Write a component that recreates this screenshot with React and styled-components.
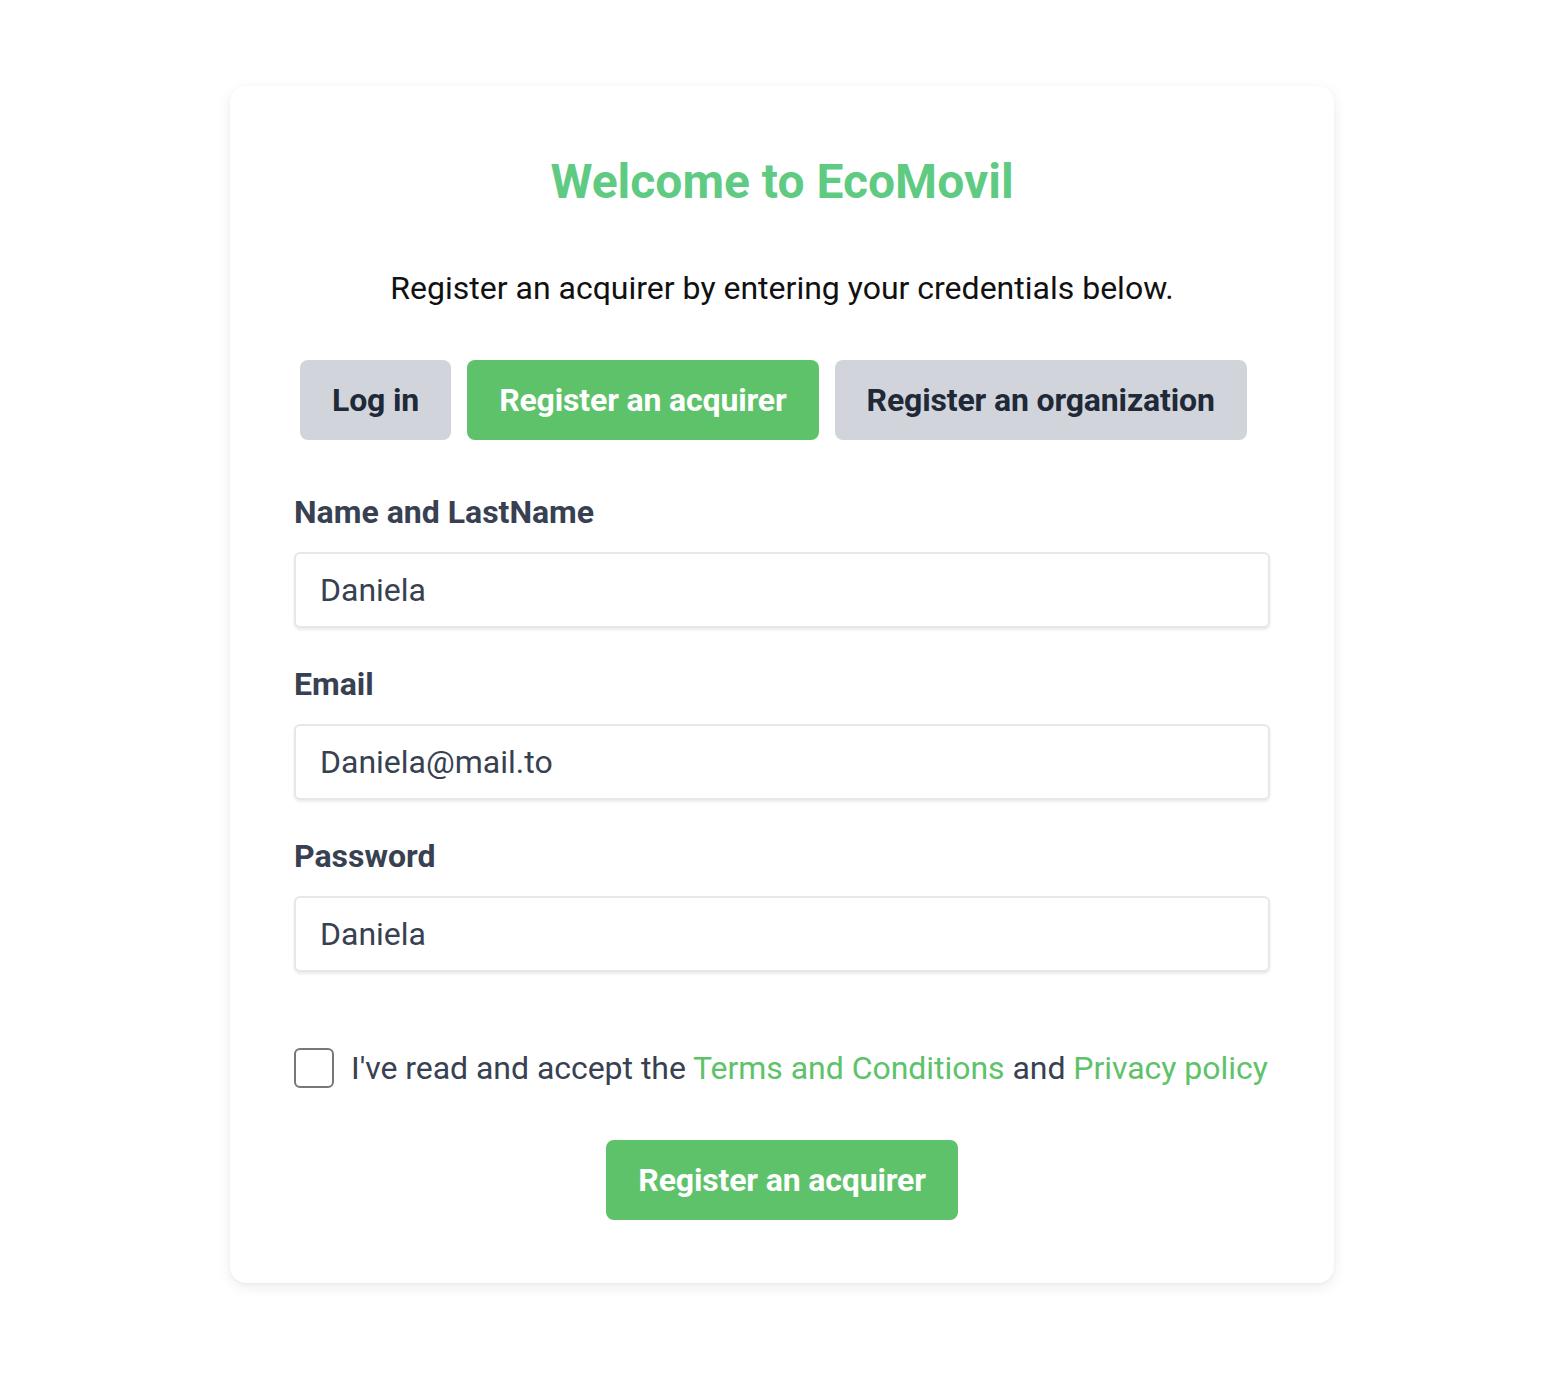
import React, { useState } from "react";
import styled, { createGlobalStyle } from "styled-components";

const GlobalStyle = createGlobalStyle`
  body {
    margin: 0;
    background: #ffffff;
    font-family: Roboto, "Liberation Sans", sans-serif;
  }
  * {
    box-sizing: border-box;
  }
`;

const Page = styled.main`
  display: flex;
  justify-content: center;
  padding: 86px 0 102px 4px;
`;

const Card = styled.section`
  width: 1104px;
  background: #ffffff;
  border-radius: 16px;
  box-shadow: 0 4px 14px rgba(0, 0, 0, 0.08), 0 1px 3px rgba(0, 0, 0, 0.04);
  padding: 64px 64px 63px;
  display: flex;
  flex-direction: column;
`;

const Title = styled.h1`
  margin: 0;
  text-align: center;
  font-size: 48px;
  line-height: 64px;
  font-weight: 700;
  color: #5fcb82;
`;

const Subtitle = styled.p`
  margin: 50px 0 0;
  text-align: center;
  font-size: 32px;
  line-height: 48px;
  color: #111111;
`;

const Tabs = styled.div`
  display: flex;
  gap: 16px;
  margin: 48px 0 0;
  padding-left: 6px;
`;

const Tab = styled.button`
  height: 80px;
  padding: 0 32px;
  border: none;
  border-radius: 8px;
  font-family: inherit;
  font-size: 32px;
  font-weight: 700;
  letter-spacing: -0.15px;
  cursor: pointer;
  background: ${(p) => (p.$active ? "#5ec26a" : "#d1d5db")};
  color: ${(p) => (p.$active ? "#ffffff" : "#1f2937")};
`;

const Field = styled.div`
  display: flex;
  flex-direction: column;
  gap: 20px;
  margin-top: ${(p) => p.$top}px;
`;

const Label = styled.label`
  font-size: 32px;
  line-height: 40px;
  font-weight: 700;
  color: #374151;
`;

const Input = styled.input`
  height: 76px;
  width: 100%;
  padding: 0 24px;
  border: 2px solid #e5e7eb;
  border-radius: 6px;
  box-shadow: 0 2px 3px rgba(0, 0, 0, 0.08);
  font-family: inherit;
  font-size: 32px;
  color: #374151;
  outline: none;
`;

const Terms = styled.label`
  display: flex;
  align-items: center;
  gap: 17px;
  margin-top: 76px;
  font-size: 32px;
  line-height: 40px;
  color: #374151;
  white-space: nowrap;
  letter-spacing: -0.04px;
`;

const Box = styled.span`
  width: 40px;
  height: 40px;
  flex-shrink: 0;
  border: 2px solid #777777;
  border-radius: 6px;
  background: ${(p) => (p.$checked ? "#5ec26a" : "#ffffff")};
`;

const Link = styled.a`
  color: #5ec26a;
  text-decoration: none;
`;

const Submit = styled.button`
  align-self: center;
  margin-top: 52px;
  height: 80px;
  padding: 0 32px;
  border: none;
  border-radius: 8px;
  background: #5ec26a;
  color: #ffffff;
  font-family: inherit;
  font-size: 32px;
  font-weight: 700;
  letter-spacing: -0.15px;
  cursor: pointer;
`;

const fields = [
  { label: "Name and LastName", value: "Daniela", type: "text", top: 52 },
  { label: "Email", value: "Daniela@mail.to", type: "email", top: 36 },
  { label: "Password", value: "Daniela", type: "text", top: 36 },
];

const tabs = ["Log in", "Register an acquirer", "Register an organization"];

export default function App() {
  const [checked, setChecked] = useState(false);
  return (
    <>
      <GlobalStyle />
      <Page>
        <Card>
          <Title>Welcome to EcoMovil</Title>
          <Subtitle>Register an acquirer by entering your credentials below.</Subtitle>
          <Tabs>
            {tabs.map((t, i) => (
              <Tab key={t} $active={i === 1}>
                {t}
              </Tab>
            ))}
          </Tabs>
          {fields.map((f) => (
            <Field key={f.label} $top={f.top}>
              <Label>{f.label}</Label>
              <Input type={f.type} defaultValue={f.value} />
            </Field>
          ))}
          <Terms onClick={() => setChecked(!checked)}>
            <Box $checked={checked} />
            <span>
              I've read and accept the <Link href="#">Terms and Conditions</Link> and{" "}
              <Link href="#">Privacy policy</Link>
            </span>
          </Terms>
          <Submit>Register an acquirer</Submit>
        </Card>
      </Page>
    </>
  );
}
